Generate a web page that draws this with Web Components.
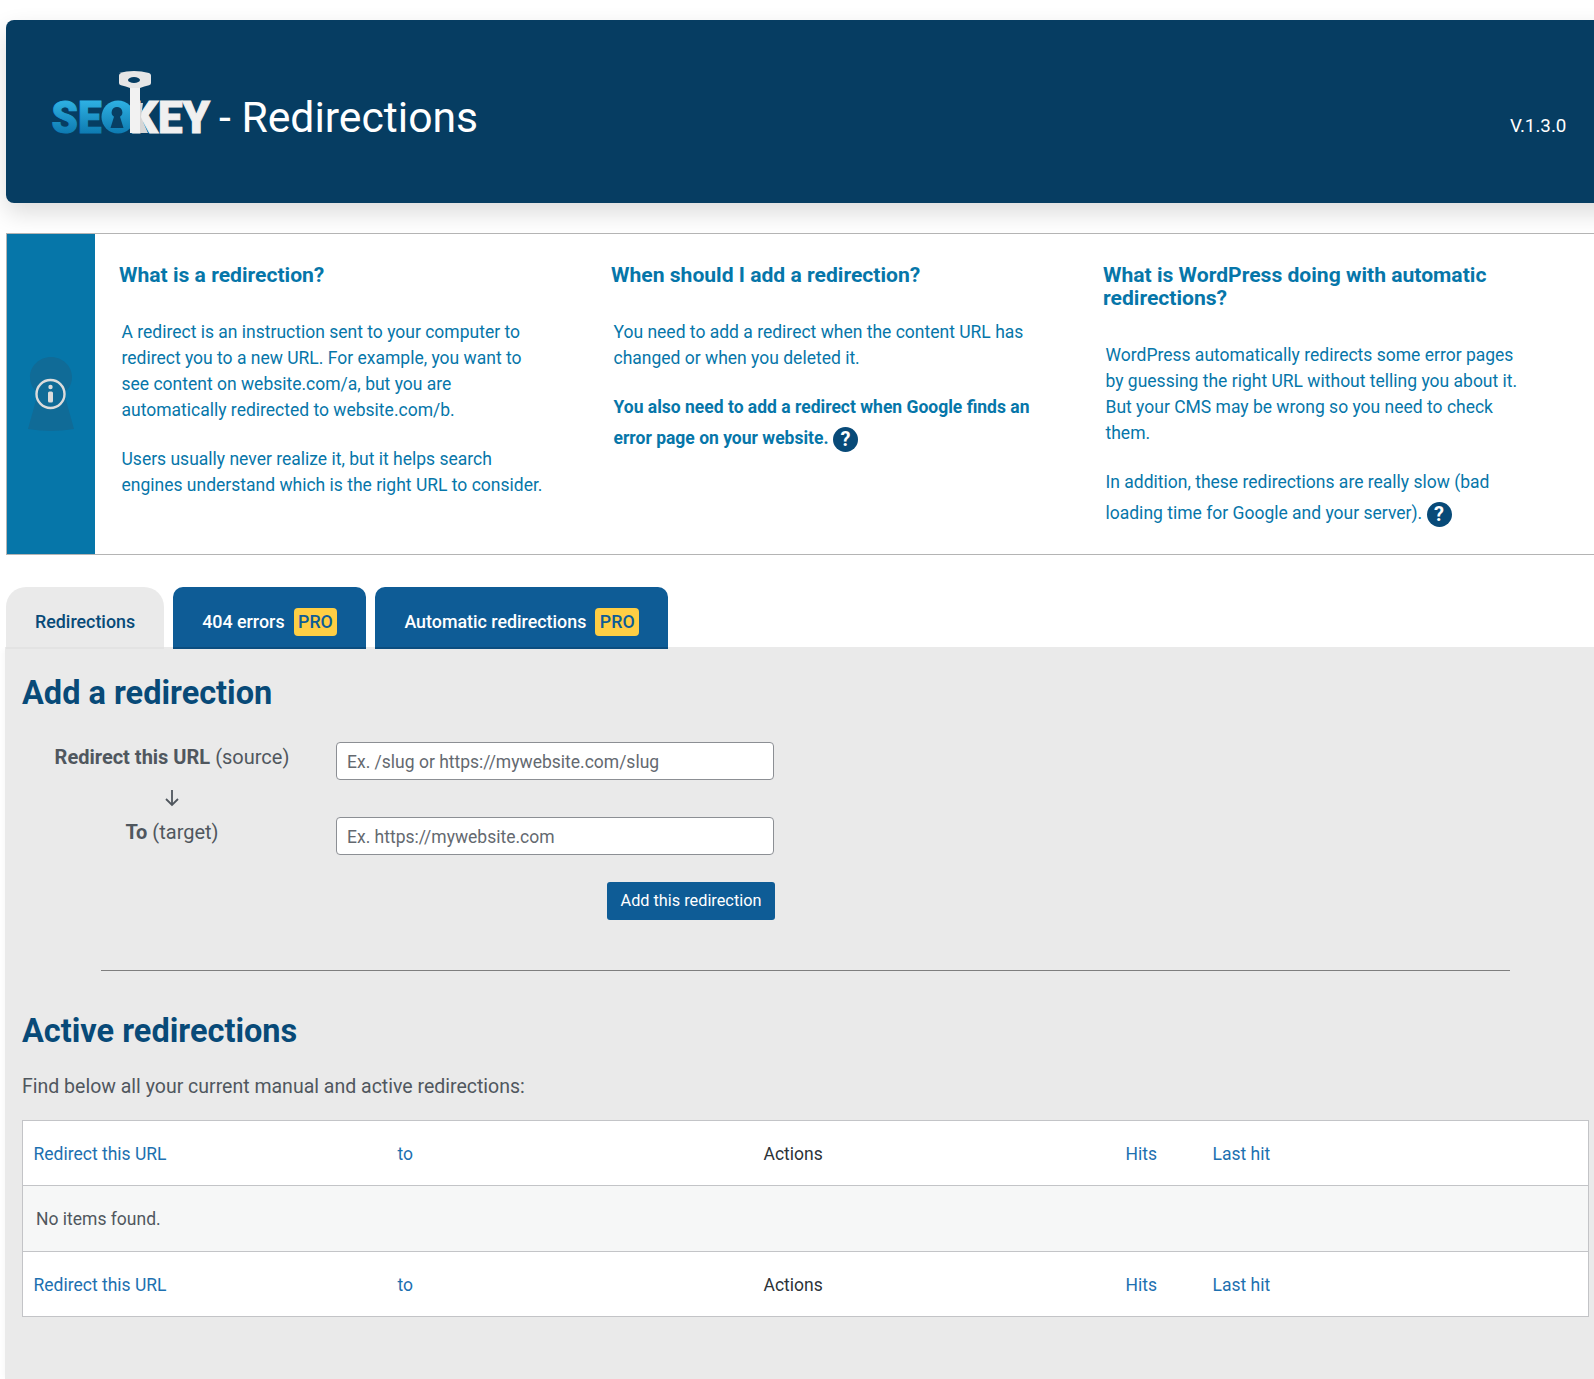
<!DOCTYPE html>
<html lang="en"><head><meta charset="utf-8"><title>SEOKEY - Redirections</title>
<style>
html,body{margin:0;padding:0;background:#fff;overflow-x:hidden}
body{width:1594px;height:1379px;overflow:hidden;font-family:Roboto,"Liberation Sans",sans-serif;color:#50575e}
</style></head><body>
<sk-page>
  <sk-header version="V.1.3.0">- Redirections</sk-header>
  <sk-info>
    <sk-info-col heading="What is a redirection?">
      <p>A redirect is an instruction sent to your computer to redirect you to a new URL. For example, you want to see content on website.com/a, but you are automatically redirected to website.com/b.</p>
      <p>Users usually never realize it, but it helps search engines understand which is the right URL to consider.</p>
    </sk-info-col>
    <sk-info-col heading="When should I add a redirection?">
      <p>You need to add a redirect when the content URL has changed or when you deleted it.</p>
      <p><b>You also need to add a redirect when Google finds an error page on your website.</b> <sk-help></sk-help></p>
    </sk-info-col>
    <sk-info-col heading="What is WordPress doing with automatic redirections?">
      <p>WordPress automatically redirects some error pages by guessing the right URL without telling you about it. But your CMS may be wrong so you need to check them.</p>
      <p>In addition, these redirections are really slow (bad loading time for Google and your server). <sk-help></sk-help></p>
    </sk-info-col>
  </sk-info>
  <sk-tabs>
    <sk-tab active>Redirections</sk-tab>
    <sk-tab pro>404 errors</sk-tab>
    <sk-tab pro>Automatic redirections</sk-tab>
  </sk-tabs>
  <sk-panel>
    <sk-title>Add a redirection</sk-title>
    <sk-form></sk-form>
    <sk-rule></sk-rule>
    <sk-title class="second">Active redirections</sk-title>
    <sk-lead>Find below all your current manual and active redirections:</sk-lead>
    <sk-table></sk-table>
  </sk-panel>
</sk-page>
<script>
function def(name, css, html){
  customElements.define(name, class extends HTMLElement{
    connectedCallback(){
      if(this.shadowRoot) return;
      const r=this.attachShadow({mode:'open'});
      r.innerHTML='<style>'+css+'</style>'+(typeof html==='function'?html(this):html);
    }
  });
}
def('sk-page',':host{display:block;padding-top:20px}','<slot></slot>');
def('sk-logo',':host{display:block;width:166px;height:70px;flex:none}svg{display:block;overflow:visible}',`
<svg width="166" height="70" viewBox="0 0 166 70" xmlns="http://www.w3.org/2000/svg">
<defs><linearGradient id="b" gradientUnits="userSpaceOnUse" x1="0" y1="30" x2="0" y2="66"><stop offset="0" stop-color="#2fb2e4"/><stop offset="1" stop-color="#0b76ad"/></linearGradient></defs>
<text x="0.5" y="63" font-family="Roboto,sans-serif" font-weight="900" font-size="44" fill="url(#b)" textLength="50" lengthAdjust="spacingAndGlyphs" stroke="url(#b)" stroke-width="1">SE</text>
<circle cx="67" cy="47" r="16.500" fill="url(#b)"/>
<path d="M66 37a5.300 5.300 0 0 1 3 9.700l3.500 11.300h-13l3.500-11.300a5.300 5.300 0 0 1 3-9.700z" fill="#083f64"/>
<text x="79" y="63" font-family="Roboto,sans-serif" font-weight="900" font-size="44" fill="#f0f0f0" stroke="#f0f0f0" stroke-width="1" textLength="80" lengthAdjust="spacingAndGlyphs">KEY</text>
<path d="M88 33h4l-2 14 7 16h-9z" fill="#d6d6d6"/>
<path d="M79 16h10v47h-10z" fill="#f2f2f2"/>
<path d="M68 3q15-4 30 0q2 .6 2 2.500v7.500q0 1.800-2 2.300q-5 1.200-9 2.700h-10q-4-1.500-9-2.700q-2-.5-2-2.300v-7.500q0-1.900 2-2.500z" fill="#e6e6e6"/>
<ellipse cx="83" cy="10" rx="6" ry="3" fill="#063d62"/>
</svg>`);
def('sk-header',`:host{display:flex;align-items:center;box-sizing:border-box;margin-left:6px;width:1620px;height:183px;background:#063d62;border-radius:8px 0 0 8px;box-shadow:0 10px 25px rgba(0,0,0,.14);color:#fff;padding:0 0 0 45px;font-family:Roboto,sans-serif}
.t{font-size:42.700px;font-weight:400;margin-left:2px;margin-top:11px;color:#fff;line-height:1}
.v{margin-left:auto;margin-right:59px;font-size:18.800px;margin-top:28px;width:57px;white-space:nowrap}
.l{margin-top:-13px}`,
 h=>`<sk-logo class="l"></sk-logo><div class="t"><slot></slot></div><div class="v">${h.getAttribute('version')}</div>`);
def('sk-info',`:host{display:flex;box-sizing:border-box;margin:30px 0 0 6px;width:1620px;height:322px;background:#fff;border:1px solid #b4b4b4;border-right:0}
.side{flex:none;width:88px;background:#0676a9;display:flex;align-items:center;justify-content:center}
.cols{display:grid;grid-template-columns:492px 492px 1fr;padding:29px 0 0 24px;flex:1;align-items:start}
.side svg{display:block}`,`
<div class="side"><svg width="48" height="74" viewBox="0 0 48 74"><path d="M24 0c11.600 0 21 9 21 20 0 7-3 12-8 16l10 36q-23 4-46 0l10-36c-5-4-8-9-8-16C3 9 12.400 0 24 0z" fill="#106b97"/><circle cx="23.500" cy="37" r="14" fill="none" stroke="#dcdcdc" stroke-width="2.400"/><circle cx="23.500" cy="30" r="2.200" fill="#dcdcdc"/><rect x="21" y="34.500" width="5" height="11" rx="1.500" fill="#dcdcdc"/></svg></div><div class="cols"><slot></slot></div>`);
def('sk-info-col',`:host{display:block;color:#0676a9;font-size:17.500px;line-height:26px;width:432px}
h3{margin:0 0 33px;font-size:21.100px;line-height:23px;font-weight:700;color:#0676a9}
.b{padding-left:2.500px}
::slotted(p){margin:0 0 23px !important}`,
 h=>`<h3>${h.getAttribute('heading')}</h3><div class="b"><slot></slot></div>`);
def('sk-help',`:host{display:inline-flex;vertical-align:middle;align-items:center;justify-content:center;width:25px;height:25px;border-radius:50%;background:#084a78;color:#fff;font:700 20px/1 Roboto,sans-serif;margin:6.500px 0 8px 0}`,'?');
def('sk-tabs',`:host{display:flex;gap:9px;margin:32px 0 0 6px;height:62px;position:relative;z-index:3}`,'<slot></slot>');
def('sk-tab',`:host{display:flex;align-items:center;box-sizing:border-box;height:62px;padding:9px 29px 0;background:#0e5c96;color:#fff;border-radius:10px 10px 0 0;font-size:17.850px;font-weight:500;white-space:nowrap;border-bottom:2px solid #0b4d7f}
:host([active]){background:#eaeaea;color:#084a78;border-radius:20px 20px 0 0;border-bottom-color:#e3e3e3}
.p{display:inline-block;background:#ffce44;color:#0e5c96;border-radius:4px;padding:0 4.500px;margin-left:9px;line-height:28px;font-size:17.800px;font-weight:500}`,
 h=>`<slot></slot>${h.hasAttribute('pro')?'<span class="p">PRO</span>':''}`);
def('sk-panel',`:host{display:block;box-sizing:border-box;margin:-2px 0 0 5px;width:1589px;height:734px;background:#eaeaea;padding:26px 0 0 17px;box-shadow:-5px 0 5px -3px rgba(0,0,0,.03);position:relative;z-index:2}`,'<slot></slot>');
def('sk-title',`:host{display:block;font-size:32.500px;line-height:40px;font-weight:700;color:#084a78}:host(.second){margin-top:40px}`,'<slot></slot>');
def('sk-form',`:host{display:grid;grid-template-columns:314px 438px;margin-top:29px;color:#50575e;font-size:20px}
.lab{text-align:center;height:38px;line-height:30px;width:300px}
b{font-weight:700}
.in{box-sizing:border-box;width:438px;height:38px;background:#fff;border:1px solid #8c8f94;border-radius:4px;padding:1px 10px 0;font-size:17.500px;line-height:36px;color:#646970;white-space:nowrap}
.arrow{height:33px;margin:1px 0 3px;display:flex;justify-content:center;align-items:center;width:300px}
.sp{height:37px}
.btn{grid-column:2;justify-self:end;margin:27px -1px 0 0;box-sizing:border-box;width:168px;height:38px;background:#0e5c96;color:#fff;border-radius:3px;font-size:16.300px;font-weight:400;line-height:38px;text-align:center}`,`
<div class="lab"><b>Redirect this URL</b> (source)</div><div class="in">Ex. /slug or https://mywebsite.com/slug</div>
<div class="arrow"><svg width="16" height="19" viewBox="0 0 16 19"><path d="M8 2v15M2 11l6 6 6-6" fill="none" stroke="#50575e" stroke-width="1.800"/></svg></div><div class="sp"></div>
<div class="lab"><b>To</b> (target)</div><div class="in">Ex. https://mywebsite.com</div>
<div class="btn">Add this redirection</div>`);
def('sk-rule',`:host{display:block;width:1409px;height:1px;background:#7e7e7e;margin:50px 0 0 79px}`,'');
def('sk-lead',`:host{display:block;font-size:19.500px;line-height:26px;margin-top:23px;color:#50575e}`,'<slot></slot>');
def('sk-table',`:host{display:block;box-sizing:border-box;width:1567px;margin-top:20px;background:#fff;border:1px solid #c3c4c7;font-size:17.500px;color:#2c3338}
.row{display:grid;grid-template-columns:364px 366px 362px 87px 1fr;height:64px;padding-top:1px;align-items:center;padding-left:10.500px;box-sizing:border-box}
.row.last{height:65px;padding-top:1px;border-top:1px solid #c3c4c7}
.mid{height:66px;background:#f6f7f7;display:flex;align-items:center;padding-left:13px;box-sizing:border-box;color:#50575e;border-top:1px solid #c3c4c7}
.row span{color:#1d70b0}
.row span.n{color:#2c3338}`,`
<div class="row"><span>Redirect this URL</span><span>to</span><span class="n">Actions</span><span>Hits</span><span>Last hit</span></div>
<div class="mid">No items found.</div>
<div class="row last"><span>Redirect this URL</span><span>to</span><span class="n">Actions</span><span>Hits</span><span>Last hit</span></div>`);
</script>
</body></html>
